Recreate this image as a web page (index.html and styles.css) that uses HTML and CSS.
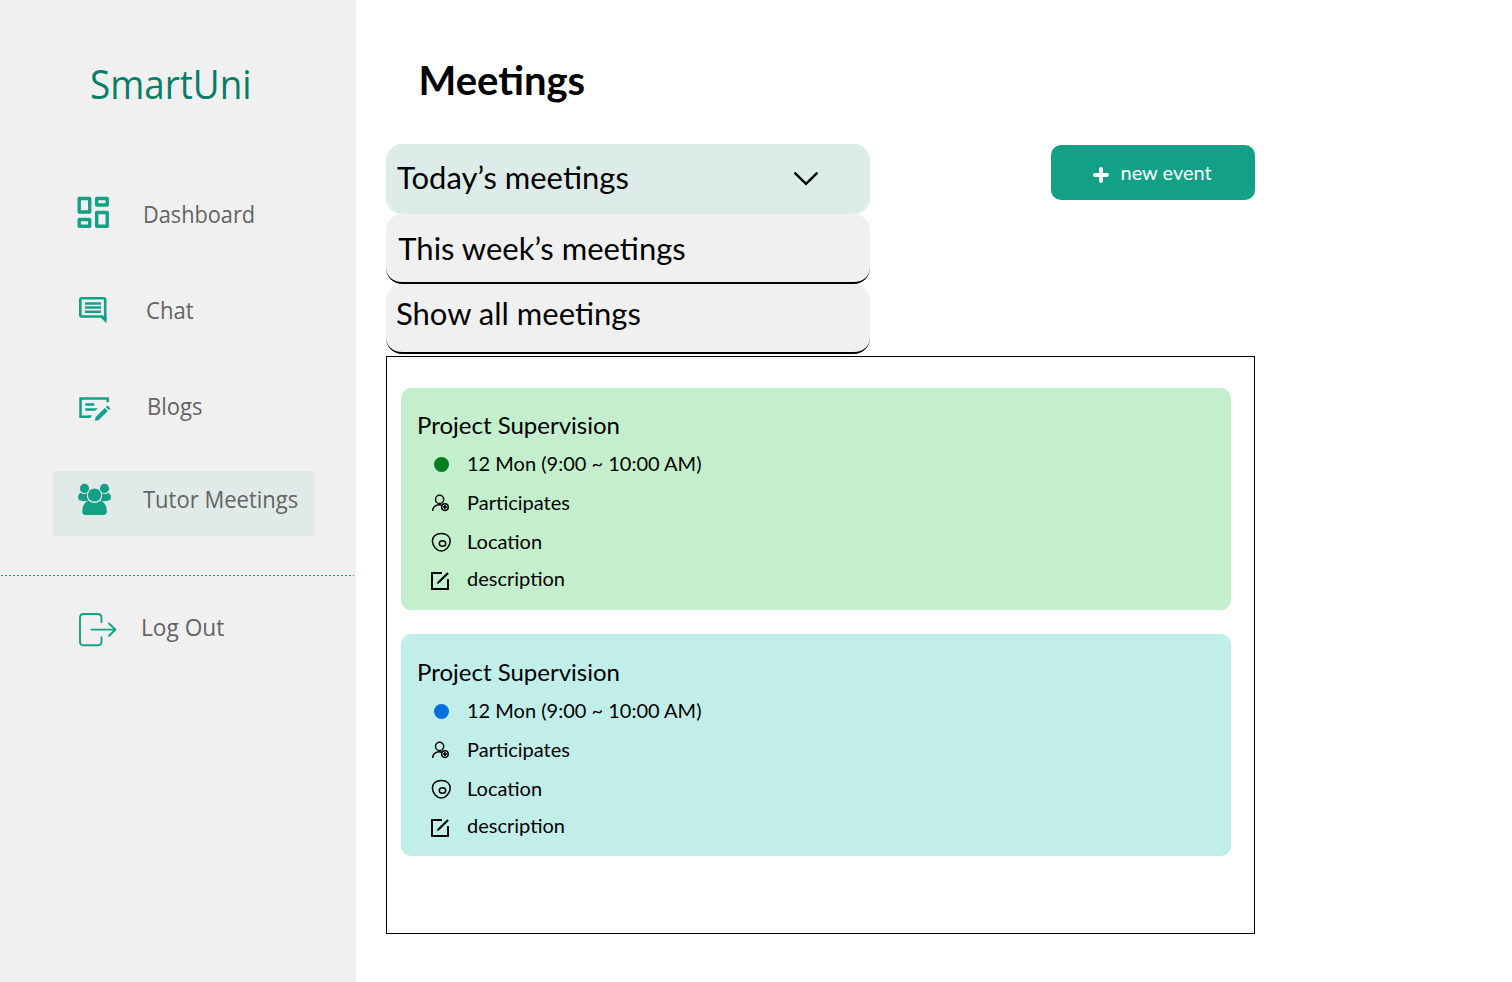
FILE: index.html
```html
<!DOCTYPE html>
<html lang="en">
<head>
<meta charset="utf-8">
<title>SmartUni – Meetings</title>
<link rel="stylesheet" href="styles.css">
</head>
<body>
<svg width="0" height="0" class="sprite" aria-hidden="true">
  <symbol id="i-person" viewBox="429 489 24 27">
    <g fill="none" stroke="#000" stroke-width="1.5">
      <circle cx="439.600" cy="499.400" r="4.100"/>
      <path d="M432.700 511v-.8a6.400 6.400 0 0 1 9.600-4.600"/>
      <circle cx="444.900" cy="507.100" r="3.300"/>
      <path d="M444.900 505v4.200M442.800 507.100h4.200"/>
    </g>
  </symbol>
  <symbol id="i-place" viewBox="429 528 24 27">
    <g fill="none" stroke="#000" stroke-width="1.5">
      <path d="M441.300 533.500c5.200 0 8.900 2.900 8.900 7.500 0 5.300-4.600 10.100-8.900 10.100s-8.900-4.800-8.900-10.100c0-4.600 3.700-7.500 8.900-7.500z"/>
      <ellipse cx="442.500" cy="543.500" rx="3.200" ry="2.800"/>
    </g>
  </symbol>
  <symbol id="i-edit" viewBox="429 565 24 27">
    <path fill="none" stroke="#000" stroke-width="2" d="M442 573h-10v16h16v-10"/>
    <path d="M447.300 572.200l1.500 1.500-9.400 9.400-2.600 1.200.9-2.600z"/>
  </symbol>
</svg>
<div class="app">
  <aside class="sidebar">
    <div class="brand"><span>SmartUni</span></div>
    <nav class="nav">
      <a class="item dashboard">
        <svg width="40" height="40" viewBox="77.300 194 40 40" fill="none" stroke="#12a187" stroke-width="3.400" stroke-linejoin="round">
          <path d="M79.500 198.500h10.500v13.500H79.500zM97 198.500h10.500v6.500H97zM97 212.500h10.500v13.700H97zM79.500 219.500h10.500v6.700H79.500z"/>
        </svg><span>Dashboard</span></a>
      <a class="item chat">
        <svg width="40" height="40" viewBox="77 290 40 40" fill="none" stroke="#12a187">
          <path stroke-width="2.600" stroke-linejoin="round" d="M81.800 298.300h21.700q1.700 0 1.700 1.700v19.500l-3-3H81.800q-1.500 0-1.500-1.500V299.800q0-1.500 1.500-1.500z"/>
          <path fill="#12a187" stroke="none" d="M100.500 317.500l6 5.800v-8z"/>
          <path stroke-width="2.500" d="M85 303.500h16M85 307.600h16M85 311.700h16"/>
        </svg><span>Chat</span></a>
      <a class="item blogs">
        <svg width="40" height="40" viewBox="77 386 40 40" fill="none" stroke="#12a187">
          <path stroke-width="2.500" d="M107.700 402.300v-3.900H80.500v18.400h10.200"/>
          <path fill="#12a187" stroke="none" d="M88 415.500h4.300l-2.700 2.600H88zM85.300 403.300h9v2.500h-9zM85.300 408.200h12.600l-2.700 2.500h-9.900zM95 420.800l.5-3.600 9.300-9.300 3 3-9.300 9.300zM105.700 407l1.700-1.600 3.200 3.100-1.700 1.600z"/>
        </svg><span>Blogs</span></a>
      <a class="item tutor active">
        <svg width="40" height="40" viewBox="77 479 40 40" fill="#12a187">
          <circle cx="84.500" cy="488.400" r="4.600"/><circle cx="104.500" cy="488.400" r="4.600"/>
          <path d="M80.500 492.800q3.500 2.300 6.700.2-1 4.500 1.500 7.800-4 .8-8.700-.3-2-.6-2-3 0-3 2.500-4.700zM108.500 492.800q-3.500 2.300-6.700.2 1 4.500-1.500 7.800 4 .8 8.700-.3 2-.6 2-3 0-3-2.500-4.700z"/>
          <circle cx="94.500" cy="495" r="6.600"/>
          <path d="M88.600 500.800q5.900 4.400 11.800 0 6.200 2.200 6.500 10.500 0 3.700-3.600 3.700H85.800q-3.600 0-3.600-3.700.3-8.300 6.400-10.500z"/>
        </svg><span>Tutor Meetings</span></a>
    </nav>
    <hr class="divider">
    <a class="item logout">
      <svg width="40" height="40" viewBox="77 610 40 40" fill="none" stroke="#12a187" stroke-width="1.900" stroke-linecap="round" stroke-linejoin="round">
        <path d="M101.500 622v-4.200q0-3.800-3.800-3.800H83.800q-3.800 0-3.800 3.800v23.600q0 3.800 3.800 3.800h13.900q3.800 0 3.800-3.800V637.200M91.500 629.600h24M109 623.500l6.500 6.100-6.500 6.100"/>
      </svg><span>Log Out</span></a>
  </aside>
  <main class="main">
    <h1>Meetings</h1>
    <div class="toolbar">
      <div class="select">
        <div class="option current"><span>Today’s meetings</span>
          <svg width="26" height="16" viewBox="0 0 26 16" fill="none" stroke="#000" stroke-width="2.500" stroke-linecap="round" stroke-linejoin="miter"><path d="M2.300 2.300L13 12.800 23.700 2.300"/></svg>
        </div>
        <div class="option week"><span>This week’s meetings</span></div>
        <div class="option all"><span>Show all meetings</span></div>
      </div>
      <button class="new-event">
        <svg width="16" height="16" viewBox="0 0 16 16" stroke="#fff" stroke-width="3.800" stroke-linecap="round"><path d="M8 1.900v12.200M1.900 8h12.200"/></svg>
        <span>new event</span>
      </button>
    </div>
    <section class="list">
      <article class="card green">
        <h2>Project Supervision</h2>
        <div class="row"><i class="dot"></i><span>12 Mon (9:00 ~ 10:00 AM)</span></div>
        <div class="row"><svg width="24" height="27"><use href="#i-person"/></svg><span>Participates</span></div>
        <div class="row"><svg width="24" height="27"><use href="#i-place"/></svg><span>Location</span></div>
        <div class="row last"><svg width="24" height="27"><use href="#i-edit"/></svg><span>description</span></div>
      </article>
      <article class="card blue">
        <h2>Project Supervision</h2>
        <div class="row"><i class="dot"></i><span>12 Mon (9:00 ~ 10:00 AM)</span></div>
        <div class="row"><svg width="24" height="27"><use href="#i-person"/></svg><span>Participates</span></div>
        <div class="row"><svg width="24" height="27"><use href="#i-place"/></svg><span>Location</span></div>
        <div class="row last"><svg width="24" height="27"><use href="#i-edit"/></svg><span>description</span></div>
      </article>
    </section>
  </main>
</div>
</body>
</html>
```
FILE: styles.css
```css
* { box-sizing: border-box; }
body { margin: 0; background: #fff; color: #000; font-family: Lato, sans-serif; white-space: nowrap; }
svg { display: block; flex: none; }
.sprite { position: absolute; }
.app { display: flex; height: 982px; overflow: hidden; }

.sidebar { flex: none; width: 356px; background: #f0f0f0; font-family: "Open Sans", "Noto Sans", sans-serif; }
.brand { padding: 54px 0 0 90px; height: 181px; font-size: 40px; line-height: 60px; color: #077e69; }
.brand span, .item span { display: inline-block; transform: scaleX(.92); transform-origin: 0 50%; }
.nav { display: flex; flex-direction: column; gap: 31px; }
.item { display: flex; align-items: center; width: 261px; height: 65px; margin-left: 53px; padding-left: 24px; font-size: 24px; line-height: 33px; color: #646464; }
.dashboard span { margin-left: 26px; transform: scaleX(.905); }
.chat span { margin-left: 28.6px; }
.blogs span { margin-left: 30px; }
.active { margin-top: 2px; padding-bottom: 9px; background: #e0eae8; }
.tutor span { margin: -2px 0 0 25.5px; transform: scaleX(.917); }
.divider { height: 1px; margin: 39px 2px 20px 1px; border: 0; background: repeating-linear-gradient(90deg, #12a187 0 2px, transparent 2px 4px); }
.logout { height: 65px; }
.logout svg { margin-top: 3px; }
.logout span { margin: -4px 0 0 24px; transform: scaleX(.945); }

.main { width: 869px; margin-left: 30px; }
h1 { margin: 55px 0 39px 32.5px; font-size: 40px; line-height: 50px; font-weight: 700; }
.toolbar { display: flex; justify-content: space-between; align-items: flex-start; height: 212px; }
.select { width: 484px; font-size: 31px; line-height: 38px; }
.option { display: flex; justify-content: space-between; height: 70px; border-radius: 16px; background: #f0f0f0; border-bottom: 2px solid #000; }
.current { padding: 14px 51px 0 11px; background: #deece9; border: 0; }
.current svg { margin-top: 13px; }
.week { padding: 15px 0 0 12.3px; }
.all { padding: 10px 0 0 10px; }
.new-event { display: flex; align-items: center; gap: 11.5px; width: 204px; height: 55px; margin-top: 1px; padding: 0 0 0 42px; border: 0; border-radius: 10px; background: #12a187; color: #fff; font: 400 20px/24px Lato, sans-serif; }
.new-event svg { margin-top: 4px; }
.new-event span { margin-top: -2px; }

.list { height: 578px; padding: 31px 23px 0 14px; border: 1px solid #000; }
.card { height: 222px; padding: 21px 0 0 16px; border-radius: 10px; }
.card + .card { margin-top: 24px; padding-top: 22px; }
.green { background: #c3efcc; }
.blue { background: #c1eee9; }
.card h2 { margin: 0 0 4px; font-size: 24px; line-height: 31px; font-weight: 400; }
.row { display: grid; grid-template-columns: 38px auto; align-items: center; height: 39px; padding-left: 12px; font-size: 20px; line-height: 25px; }
.last { height: 35px; }
.dot { width: 15px; height: 15px; margin: 2px 0 0 5px; border-radius: 50%; background: #067d1e; }
.blue .dot { background: #0270dc; }
```
